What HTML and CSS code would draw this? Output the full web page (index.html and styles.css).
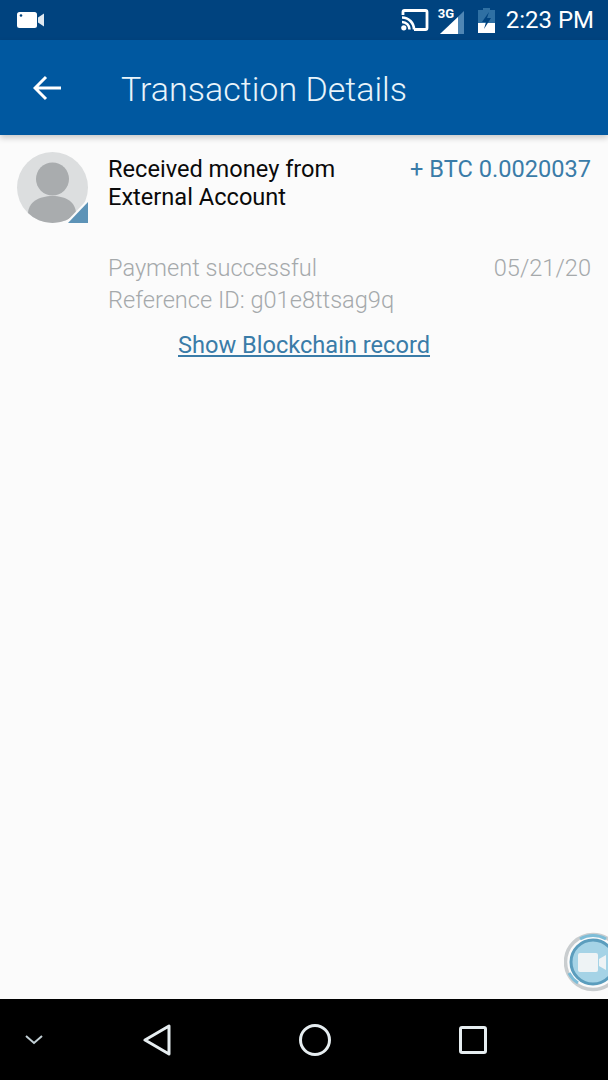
FILE: index.html
```html
<!DOCTYPE html>
<html lang="en">
<head>
  <meta charset="UTF-8" />
  <meta name="viewport" content="width=device-width, initial-scale=1" />
  <title>Transaction Details</title>
  <link rel="stylesheet" href="styles.css">
</head>
<body>
  <div class="screen">
    <div class="status-bar">
      <svg class="icon-video" width="28" height="18" viewBox="0 0 28 18">
        <rect x="0" y="1" width="20" height="16" rx="2.5" fill="#fff"/>
        <circle cx="4" cy="4.5" r="1.3" fill="#00437f"/>
        <path d="M21 6.500 L27 2.500 V15.500 L21 11.500 Z" fill="#dfe9f1"/>
      </svg>
      <div class="status-right">
        <svg class="icon-cast" width="28" height="22" viewBox="0 0 28 22">
          <path d="M2 6 V3 Q2 1.500 3.500 1.500 H24.500 Q26 1.500 26 3 V19 Q26 20.500 24.500 20.500 H13" fill="none" stroke="#fff" stroke-width="2.800"/>
          <path d="M1 8.500 A12 12 0 0 1 13 20.500 M1 13 A7.500 7.500 0 0 1 8.500 20.500" fill="none" stroke="#fff" stroke-width="2.600"/>
          <circle cx="2.800" cy="18.800" r="2.600" fill="#fff"/>
        </svg>
        <div class="signal">
          <span class="signal-label">3G</span>
          <svg width="25" height="24" viewBox="0 0 25 24">
            <path d="M0 24 L24 1 V24 Z" fill="#4f86b4"/>
            <path d="M0 24 L18 7 V24 Z" fill="#fff"/>
          </svg>
        </div>
        <svg class="icon-battery" width="17" height="25" viewBox="0 0 17 25">
          <path d="M5 0 H12 V2 H17 V25 H0 V2 H5 Z" fill="#2f70a3"/>
          <path d="M0 15 H17 V25 H0 Z" fill="#fff"/>
          <path d="M11 4 L4 14 H8 L6 21 L13 10 H9 Z" fill="#00437f"/>
        </svg>
        <span class="clock">2:23 PM</span>
      </div>
    </div>

    <header class="app-bar">
      <svg class="icon-back" width="28" height="26" viewBox="0 0 28 26">
        <path d="M28 13 H3 M13 2 L2 13 L13 24" fill="none" stroke="#fff" stroke-width="3"/>
      </svg>
      <h1 class="app-title">Transaction Details</h1>
    </header>

    <main class="content">
      <div class="transaction">
        <div class="avatar-wrap">
          <svg width="71" height="71" viewBox="0 0 71 71">
            <defs>
              <clipPath id="avatar-clip"><circle cx="35.500" cy="35.500" r="35.500"/></clipPath>
            </defs>
            <circle cx="35.500" cy="35.500" r="35.500" fill="#dcdedf"/>
            <g clip-path="url(#avatar-clip)">
              <circle cx="35.500" cy="27" r="16.500" fill="#a9acae"/>
              <path d="M11 71 V62 C11 50 22 44 35.500 44 C49 44 59 50 59 62 V71 Z" fill="#a9acae"/>
            </g>
            <path d="M48 71 L71 47 V71 Z" fill="#fbfbfb"/>
            <path d="M51 71 L71 50 V71 Z" fill="#5d93b7"/>
          </svg>
        </div>
        <div class="details">
          <div class="line-top">
            <div class="title">Received money from<br>External Account</div>
            <div class="amount">+ BTC 0.0020037</div>
          </div>
          <div class="line-status">
            <div class="muted">Payment successful<br>Reference ID: g01e8ttsag9q</div>
            <div class="muted">05/21/20</div>
          </div>
        </div>
      </div>
      <a class="chain-link" href="#">Show Blockchain record</a>

      <div class="float-btn">
        <svg width="44" height="60" viewBox="0 0 44 60">
          <circle cx="29" cy="30" r="27.500" fill="none" stroke="#c9cdcf" stroke-width="3.500"/>
          <path d="M16 7 A26 26 0 0 1 42 7" fill="none" stroke="#7dbdd8" stroke-width="3"/>
          <path d="M5 41 A26 26 0 0 0 14 51" fill="none" stroke="#7dbdd8" stroke-width="3"/>
          <circle cx="29" cy="30" r="22" fill="#a5d3e6" stroke="#5b9dbd" stroke-width="3"/>
          <rect x="14" y="21" width="20" height="19" rx="2" fill="#eef3f5"/>
          <path d="M35 27 L42 23 V38 L35 34 Z" fill="#eef3f5"/>
        </svg>
      </div>
    </main>

    <nav class="nav-bar">
      <svg class="icon-chevron" width="18" height="10" viewBox="0 0 18 10">
        <path d="M1 1 L9 8 L17 1" fill="none" stroke="#c3d0d6" stroke-width="2"/>
      </svg>
      <svg class="icon-nav-back" width="28" height="32" viewBox="0 0 28 32">
        <path d="M26 2 V30 L2 16 Z" fill="none" stroke="#e6edf0" stroke-width="3" stroke-linejoin="round"/>
      </svg>
      <svg class="icon-nav-home" width="32" height="32" viewBox="0 0 32 32">
        <circle cx="16" cy="16" r="14.500" fill="none" stroke="#e6edf0" stroke-width="3"/>
      </svg>
      <svg class="icon-nav-recent" width="28" height="28" viewBox="0 0 28 28">
        <rect x="1.500" y="1.500" width="25" height="25" rx="1.500" fill="none" stroke="#e6edf0" stroke-width="3"/>
      </svg>
    </nav>
  </div>
</body>
</html>
```

FILE: styles.css
```css
* {
  box-sizing: border-box;
}
body {
  margin: 0;
  font-family: Roboto, "Liberation Sans", sans-serif;
  background: #fbfbfb;
}
svg {
  display: block;
  flex: none;
}
.screen {
  width: 608px;
  height: 1080px;
  display: flex;
  flex-direction: column;
  overflow: hidden;
}
.status-bar {
  height: 40px;
  flex: none;
  display: flex;
  align-items: center;
  justify-content: space-between;
  padding: 0 14px 0 17px;
  background: #00437f;
  color: #fff;
}
.status-right {
  display: flex;
  align-items: center;
}
.icon-cast {
  margin-right: 9px;
}
.signal {
  display: flex;
  align-items: flex-end;
  margin-right: 13px;
  height: 28px;
  position: relative;
  width: 27px;
  justify-content: flex-end;
}
.signal-label {
  position: absolute;
  left: 0;
  top: 1px;
  font-size: 13px;
  line-height: 13px;
  font-weight: 700;
}
.icon-battery {
  margin-right: 11px;
}
.clock {
  font-size: 24px;
  line-height: 28px;
}
.app-bar {
  height: 95px;
  flex: none;
  display: flex;
  align-items: center;
  padding-left: 33px;
  background: #0058a0;
  box-shadow: 0 3px 6px rgba(0, 0, 0, 0.2);
  position: relative;
  z-index: 1;
  color: #e8f4fb;
}
.icon-back {
  margin-right: 60px;
}
.app-title {
  margin: 2px 0 0;
  font-size: 34px;
  font-weight: 300;
}
.content {
  flex: 1;
  position: relative;
  padding: 17px 17px 0;
  background: #fbfbfb;
}
.transaction {
  display: flex;
  gap: 20px;
}
.avatar-wrap {
  width: 71px;
  flex: none;
}
.details {
  flex: 1;
  padding-top: 3px;
  font-size: 23.6px;
  line-height: 28px;
}
.line-top,
.line-status {
  display: flex;
  justify-content: space-between;
}
.title {
  color: #0a0a0a;
}
.amount {
  color: #3a7ca8;
}
.line-status {
  margin-top: 41px;
}
.muted {
  color: #a5a9ab;
  font-weight: 300;
  line-height: 32px;
}
.chain-link {
  display: block;
  width: fit-content;
  margin: 13px auto 0;
  font-size: 23.6px;
  line-height: 32px;
  color: #3a7ca8;
}
.float-btn {
  position: absolute;
  right: 0;
  bottom: 7px;
  width: 44px;
  height: 60px;
  overflow: hidden;
}
.nav-bar {
  height: 81px;
  flex: none;
  display: flex;
  align-items: center;
  background: #000;
  padding: 0 0 0 25px;
}
.icon-chevron {
  margin-right: 100px;
}
.icon-nav-back {
  margin-right: 128px;
}
.icon-nav-home {
  margin-right: 128px;
}
```
